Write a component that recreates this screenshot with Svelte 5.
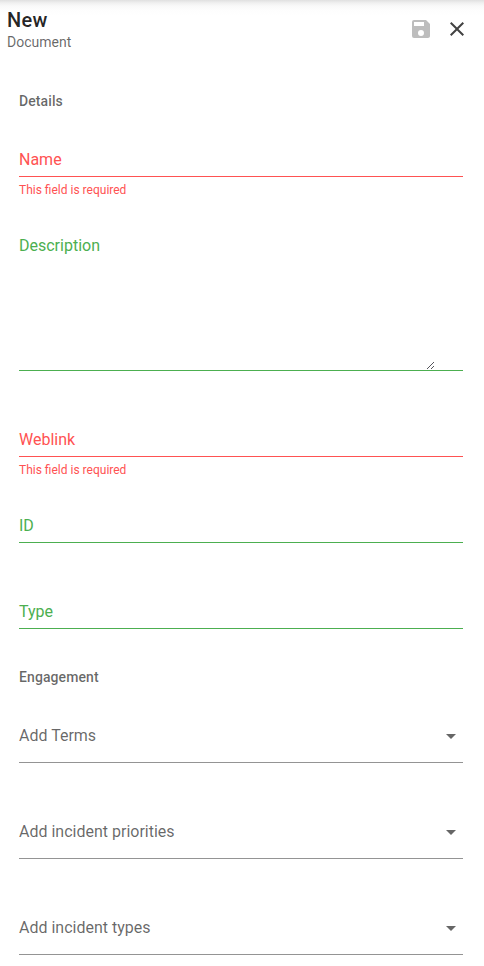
<script>
  const details = [
    { label: 'Name', required: true },
    { label: 'Description', multiline: true },
    { label: 'Weblink', required: true },
    { label: 'ID' },
    { label: 'Type' }
  ];
  const engagement = ['Add Terms', 'Add incident priorities', 'Add incident types'];
</script>

<main>
  <header>
    <div class="heading">
      <h1>New</h1>
      <p>Document</p>
    </div>
    <button class="save" aria-label="Save" disabled>
      <svg width="24" height="24" viewBox="0 0 24 24"><path fill="currentColor" d="M17 3H5a2 2 0 0 0-2 2v14a2 2 0 0 0 2 2h14c1.100 0 2-.9 2-2V7l-4-4zm-5 16a3 3 0 1 1 0-6 3 3 0 0 1 0 6zm3-10H5V5h10v4z" /></svg>
    </button>
    <button aria-label="Close">
      <svg width="24" height="24" viewBox="0 0 24 24"><path fill="currentColor" d="M19 6.410 17.590 5 12 10.590 6.410 5 5 6.410 10.590 12 5 17.590 6.410 19 12 13.410 17.590 19 19 17.590 13.410 12z" /></svg>
    </button>
  </header>

  <form>
    <h2>Details</h2>
    <div class="fields">
      {#each details as field}
        <div class="field" class:error={field.required} class:multiline={field.multiline}>
          <div class="control">
            <span>{field.label}</span>
            {#if field.multiline}
              <svg class="grip" width="7" height="7" viewBox="0 0 7 7" shape-rendering="crispEdges">
                <path fill="#55555c" d="M0 6h1v1H0zM1 5h1v1H1zM2 4h1v1H2zM3 3h1v1H3zM4 2h1v1H4zM5 1h1v1H5zM6 0h1v1H6zM4 6h1v1H4zM5 5h1v1H5zM6 4h1v1H6z" />
              </svg>
            {/if}
          </div>
          {#if field.required}<small>This field is required</small>{/if}
        </div>
      {/each}
    </div>

    <h2>Engagement</h2>
    <div class="selects">
      {#each engagement as label}
        <div class="select">
          <span>{label}</span>
          <svg width="24" height="24" viewBox="0 0 24 24"><path fill="currentColor" d="M7 10l5 5 5-5z" /></svg>
        </div>
      {/each}
    </div>
  </form>
</main>

<style>
  :global(body) {
    background: #fff;
  }
  main {
    box-sizing: border-box;
    height: 966px;
    overflow: hidden;
    font-family: Roboto, sans-serif;
    color: rgba(0, 0, 0, 0.6);
    background: linear-gradient(#e0e0e0 0, #f0f0f0 3px, #f9f9f9 6px, #fdfdfd 10px, #fff 15px) no-repeat 0 0 / 100% 15px;
  }
  header {
    display: flex;
    align-items: center;
    height: 58px;
    padding: 0 9px 0 7px;
  }
  .heading {
    flex: 1;
    padding-top: 1px;
  }
  h1, h2, p {
    margin: 0;
  }
  h1 {
    font-size: 20px;
    line-height: 24px;
    font-weight: 500;
    letter-spacing: 0.25px;
    color: rgba(0, 0, 0, 0.87);
  }
  p {
    font-size: 14px;
    line-height: 20px;
  }
  button {
    display: grid;
    place-items: center;
    width: 36px;
    height: 36px;
    padding: 0;
    border: 0;
    background: none;
    color: #424242;
  }
  .save {
    color: #bdbdbd;
  }
  form {
    padding: 33px 21px 0 19px;
  }
  h2 {
    font-size: 14px;
    line-height: 20px;
    font-weight: 500;
    letter-spacing: 0.1px;
  }
  .fields {
    padding-top: 34px;
  }
  .field {
    height: 86px;
    color: #4caf50;
  }
  .error {
    color: #ff5252;
  }
  .control {
    box-sizing: border-box;
    display: flex;
    justify-content: space-between;
    align-items: flex-start;
    height: 32px;
    padding-top: 5px;
    border-bottom: 1px solid currentColor;
    font-size: 16px;
    line-height: 20px;
  }
  .multiline {
    height: 194px;
  }
  .multiline .control {
    height: 140px;
  }
  .grip {
    align-self: flex-end;
    margin: 0 29px 1px 0;
  }
  small {
    display: block;
    padding-top: 6px;
    font-size: 12px;
    line-height: 14px;
  }
  .fields + h2 {
    margin-top: -16px;
  }
  .selects {
    display: grid;
    gap: 58px;
    padding-top: 38px;
  }
  .select {
    box-sizing: border-box;
    display: flex;
    justify-content: space-between;
    height: 38px;
    padding-top: 1px;
    border-bottom: 1px solid #949494;
    font-size: 16px;
    line-height: 20px;
  }
  .select svg {
    margin: -2px 0 0;
  }
</style>
